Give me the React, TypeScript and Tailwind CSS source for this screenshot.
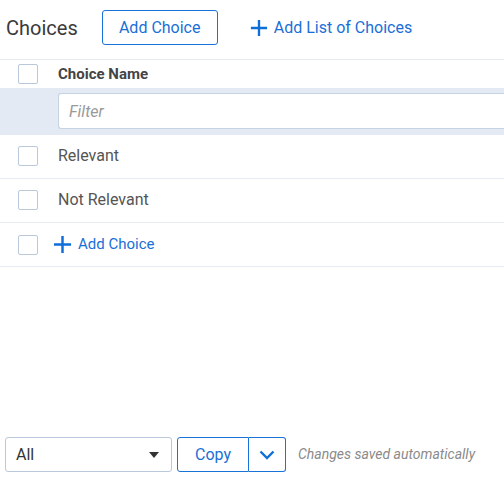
import React from 'react';

function Box() {
  return <span className="block w-5 h-5 rounded-[2px] border border-[#b9c8da] bg-white shrink-0" />;
}

function Plus({ size = 20 }: { size?: number }) {
  return (
    <svg width={size} height={size} viewBox="0 0 20 20" className="shrink-0">
      <path d="M10 1v18M1 10h18" stroke="#0f6fd8" strokeWidth="2.6" />
    </svg>
  );
}

export default function App() {
  const rows = ['Relevant', 'Not Relevant'];
  return (
    <div className="flex flex-col w-[504px] h-[484px] bg-white overflow-hidden font-['Roboto',sans-serif] text-[#333]">
      {/* Header */}
      <div className="flex items-center h-[35px] mt-[10px] pl-[6px]">
        <h1 className="text-[20px] text-[#3a3a3a]">Choices</h1>
        <button className="ml-[24px] h-[35px] w-[116px] rounded-[3px] border border-[#1a73d9] text-[16px] text-[#1a6fd6]">
          Add Choice
        </button>
        <button className="ml-[32px] flex items-center gap-[6px] text-[16px] text-[#1a6fd6]">
          <Plus size={18} />
          Add List of Choices
        </button>
      </div>

      {/* Table */}
      <div className="mt-[14px] border-t border-[#e6ebf1]">
        <div className="flex items-center h-[28px] pl-[18px]">
          <Box />
          <span className="ml-5 text-[15px] font-bold text-[#444]">Choice Name</span>
        </div>
        <div className="h-[47px] bg-[#e3eaf3] pl-[58px] py-[5px]">
          <input
            placeholder="Filter"
            className="w-full h-[36px] rounded-l-[3px] border border-r-0 border-[#c5d3e3] bg-white px-[10px] text-[16px] italic placeholder:text-[#999] outline-none"
          />
        </div>
        {rows.map((r) => (
          <div key={r} className="flex items-center h-[44px] pl-[18px] pb-[2px] border-b border-[#e6ebf1]">
            <Box />
            <span className="ml-5 text-[16px] text-[#555]">{r}</span>
          </div>
        ))}
        <div className="flex items-center h-[44px] pl-[18px] border-b border-[#e6ebf1]">
          <Box />
          <span className="ml-[15px] flex items-center gap-[6px] text-[15px] text-[#1a6fd6]">
            <Plus size={19} />
            Add Choice
          </span>
        </div>
      </div>

      {/* Footer */}
      <div className="mt-auto mb-[12px] flex items-center pl-[5px]">
        <div className="flex items-center justify-between w-[167px] h-[35px] rounded-[3px] border border-[#b9c8da] pl-[10px] pr-[12px] text-[16px] text-[#333]">
          <span>All</span>
          <svg width="10" height="6" viewBox="0 0 10 6">
            <path d="M0 0h10L5 6z" fill="#333" />
          </svg>
        </div>
        <div className="ml-[5px] flex h-[35px]">
          <button className="w-[72px] rounded-l-[3px] border border-[#1a73d9] text-[16px] text-[#1a6fd6]">Copy</button>
          <button className="w-[37px] flex items-center justify-center rounded-r-[3px] border border-l-0 border-[#1a73d9]">
            <svg width="16" height="10" viewBox="0 0 16 10">
              <path d="M1.5 1.5L8 8l6.5-6.5" stroke="#0f6fd8" strokeWidth="2.4" fill="none" />
            </svg>
          </button>
        </div>
        <span className="ml-[12px] text-[14px] italic text-[#8a8a8a]">Changes saved automatically</span>
      </div>
    </div>
  );
}
